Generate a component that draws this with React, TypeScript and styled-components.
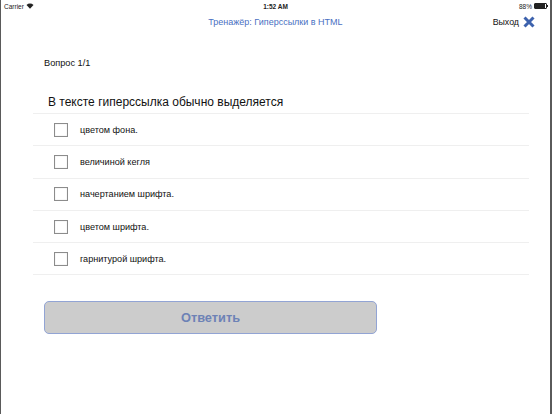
import React, { useState } from 'react'
import styled, { createGlobalStyle } from 'styled-components'

const BLUE = '#3d62ad'

const GlobalStyle = createGlobalStyle`
html, body {
    margin: 0;
    padding: 0;
    height: 100%;
    background: #fff;
}
body {
    font-family: "Liberation Sans", Arial, sans-serif;
    color: #111;
}
#root {
    height: 100%;
}
`

const Screen = styled.div`
box-sizing: border-box;
height: 414px;
width: 552px;
border-left: 1px solid #5a5a5a;
border-right: 2px solid #5a5a5a;
display: flex;
flex-direction: column;
overflow: hidden;
`

const StatusBar = styled.div`
height: 12px;
display: grid;
grid-template-columns: 1fr auto 1fr;
align-items: center;
padding: 0 3px;
font-size: 6.5px;
color: #222;
`

const Carrier = styled.div`
display: flex;
align-items: center;
gap: 2px;
`

const Clock = styled.div`
font-weight: bold;
`

const Battery = styled.div`
display: flex;
justify-content: flex-end;
align-items: center;
gap: 2px;
div{
    width: 11px;
    height: 4px;
    border: 0.5px solid #222;
    border-radius: 1px;
    background: linear-gradient(to right, #222 88%, transparent 88%);
    position: relative;
}
div::after{
    content: '';
    position: absolute;
    right: -2px;
    top: 1px;
    width: 1px;
    height: 2px;
    background: #222;
}
`

const NavBar = styled.div`
height: 20px;
display: grid;
grid-template-columns: 1fr auto 1fr;
align-items: center;
`

const Title = styled.div`
grid-column: 2;
color: #4a70c2;
font-size: 9px;
`

const Exit = styled.div`
justify-self: end;
display: flex;
align-items: center;
gap: 4px;
padding-right: 15px;
font-size: 8.8px;
cursor: pointer;
`

const Body = styled.div`
padding: 26px 21px 0 32px;
display: flex;
flex-direction: column;
`

const Counter = styled.div`
padding-left: 11px;
font-size: 9.2px;
`

const Question = styled.div`
padding: 27px 0 4px 15px;
font-size: 12px;
border-bottom: 1px solid #efefef;
`

const OptionRow = styled.label`
display: flex;
align-items: center;
height: 31.3px;
padding-left: 21px;
border-bottom: 1px solid #efefef;
font-size: 9.1px;
gap: 12px;
cursor: pointer;
`

const Box = styled.span<{ $checked: boolean }>`
box-sizing: border-box;
width: 14px;
height: 14px;
border: 1px solid #8c8c8c;
box-shadow: inset 0 0 1px #bbb;
background: ${p => p.$checked ? BLUE : '#fff'};
`

const SubmitButton = styled.button`
margin: 26px 0 0 11px;
width: 333px;
height: 33px;
background: #cccccc;
border: 1px solid #92a4d4;
border-radius: 5px;
color: #6d82b6;
font-family: "Liberation Sans", Arial, sans-serif;
font-size: 12.8px;
font-weight: bold;
`

const options = [
    "цветом фона.",
    "величиной кегля",
    "начертанием шрифта.",
    "цветом шрифта.",
    "гарнитурой шрифта."
]

const App = () => {
    const [checked, setChecked] = useState<number[]>([])

    const toggle = (i: number) => {
        setChecked(prev => prev.includes(i) ? prev.filter(x => x !== i) : [...prev, i])
    }

    return (
        <>
            <GlobalStyle />
            <Screen>
                <StatusBar>
                    <Carrier>
                        Carrier
                        <svg width="8" height="6" viewBox="0 0 8 6">
                            <path d="M0.5 2 A5 5 0 0 1 7.5 2 L4 5.8 Z" fill="#222" />
                        </svg>
                    </Carrier>
                    <Clock>1:52 AM</Clock>
                    <Battery>88% <div /></Battery>
                </StatusBar>
                <NavBar>
                    <Title>Тренажёр: Гиперссылки в HTML</Title>
                    <Exit>
                        Выход
                        <svg width="12" height="12" viewBox="0 0 12 12">
                            <path d="M1.5 1.5 L10.5 10.5 M10.5 1.5 L1.5 10.5" stroke={BLUE} strokeWidth="3" />
                        </svg>
                    </Exit>
                </NavBar>
                <Body>
                    <Counter>Вопрос 1/1</Counter>
                    <Question>В тексте гиперссылка обычно выделяется</Question>
                    {options.map((el, i) => (
                        <OptionRow key={el} onClick={() => toggle(i)}>
                            <Box $checked={checked.includes(i)} />
                            {el}
                        </OptionRow>
                    ))}
                    <div>
                        <SubmitButton disabled={checked.length === 0}>Ответить</SubmitButton>
                    </div>
                </Body>
            </Screen>
        </>
    )
}

export default App
